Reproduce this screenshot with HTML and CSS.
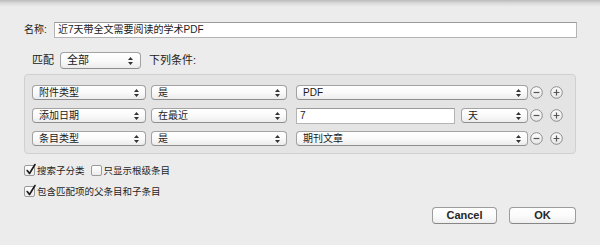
FILE: index.html
```html
<!DOCTYPE html>
<html lang="zh">
<head>
<meta charset="utf-8">
<link rel="stylesheet" href="styles.css">
</head>
<body>
<div class="window">
  <div class="topshadow"></div>
  <div class="name-row">
    <span class="label">名称:</span>
    <div class="textfield name-field">近7天带全文需要阅读的学术PDF</div>
  </div>
  <div class="match-row">
    <span class="big-label">匹配</span>
    <div class="popup popup-big"><span>全部</span><svg class="arrows" width="5" height="8" viewBox="0 0 5 8"><path d="M2.5 0 L5 3 L0 3 Z M2.5 8 L5 5 L0 5 Z" fill="#333"/></svg></div>
    <span class="big-label">下列条件:</span>
  </div>
  <div class="group">
    <div class="cond-row">
      <div class="popup w-field"><span>附件类型</span><svg class="arrows" width="5" height="8" viewBox="0 0 5 8"><path d="M2.5 0 L5 3 L0 3 Z M2.5 8 L5 5 L0 5 Z" fill="#333"/></svg></div>
      <div class="popup w-op"><span>是</span><svg class="arrows" width="5" height="8" viewBox="0 0 5 8"><path d="M2.5 0 L5 3 L0 3 Z M2.5 8 L5 5 L0 5 Z" fill="#333"/></svg></div>
      <div class="popup w-value"><span>PDF</span><svg class="arrows" width="5" height="8" viewBox="0 0 5 8"><path d="M2.5 0 L5 3 L0 3 Z M2.5 8 L5 5 L0 5 Z" fill="#333"/></svg></div>
      <div class="circ-btns">
        <svg width="13" height="13" viewBox="0 0 13 13"><defs><linearGradient id="g1" x1="0" y1="0" x2="0" y2="1"><stop offset="0" stop-color="#fdfdfd"/><stop offset="1" stop-color="#e6e6e6"/></linearGradient></defs><circle cx="6.5" cy="6.5" r="5.8" fill="url(#g1)" stroke="#8c8c8c"/><path d="M3.6 6.5 H9.4" stroke="#555" stroke-width="1.2"/></svg>
        <svg width="13" height="13" viewBox="0 0 13 13"><circle cx="6.5" cy="6.5" r="5.8" fill="url(#g1)" stroke="#8c8c8c"/><path d="M3.6 6.5 H9.4 M6.5 3.6 V9.4" stroke="#555" stroke-width="1.2"/></svg>
      </div>
    </div>
    <div class="cond-row">
      <div class="popup w-field"><span>添加日期</span><svg class="arrows" width="5" height="8" viewBox="0 0 5 8"><path d="M2.5 0 L5 3 L0 3 Z M2.5 8 L5 5 L0 5 Z" fill="#333"/></svg></div>
      <div class="popup w-op"><span>在最近</span><svg class="arrows" width="5" height="8" viewBox="0 0 5 8"><path d="M2.5 0 L5 3 L0 3 Z M2.5 8 L5 5 L0 5 Z" fill="#333"/></svg></div>
      <div class="value-split">
        <div class="textfield days-field">7</div>
        <div class="popup w-unit"><span>天</span><svg class="arrows" width="5" height="8" viewBox="0 0 5 8"><path d="M2.5 0 L5 3 L0 3 Z M2.5 8 L5 5 L0 5 Z" fill="#333"/></svg></div>
      </div>
      <div class="circ-btns">
        <svg width="13" height="13" viewBox="0 0 13 13"><circle cx="6.5" cy="6.5" r="5.8" fill="url(#g1)" stroke="#8c8c8c"/><path d="M3.6 6.5 H9.4" stroke="#555" stroke-width="1.2"/></svg>
        <svg width="13" height="13" viewBox="0 0 13 13"><circle cx="6.5" cy="6.5" r="5.8" fill="url(#g1)" stroke="#8c8c8c"/><path d="M3.6 6.5 H9.4 M6.5 3.6 V9.4" stroke="#555" stroke-width="1.2"/></svg>
      </div>
    </div>
    <div class="cond-row">
      <div class="popup w-field"><span>条目类型</span><svg class="arrows" width="5" height="8" viewBox="0 0 5 8"><path d="M2.5 0 L5 3 L0 3 Z M2.5 8 L5 5 L0 5 Z" fill="#333"/></svg></div>
      <div class="popup w-op"><span>是</span><svg class="arrows" width="5" height="8" viewBox="0 0 5 8"><path d="M2.5 0 L5 3 L0 3 Z M2.5 8 L5 5 L0 5 Z" fill="#333"/></svg></div>
      <div class="popup w-value"><span>期刊文章</span><svg class="arrows" width="5" height="8" viewBox="0 0 5 8"><path d="M2.5 0 L5 3 L0 3 Z M2.5 8 L5 5 L0 5 Z" fill="#333"/></svg></div>
      <div class="circ-btns">
        <svg width="13" height="13" viewBox="0 0 13 13"><circle cx="6.5" cy="6.5" r="5.8" fill="url(#g1)" stroke="#8c8c8c"/><path d="M3.6 6.5 H9.4" stroke="#555" stroke-width="1.2"/></svg>
        <svg width="13" height="13" viewBox="0 0 13 13"><circle cx="6.5" cy="6.5" r="5.8" fill="url(#g1)" stroke="#8c8c8c"/><path d="M3.6 6.5 H9.4 M6.5 3.6 V9.4" stroke="#555" stroke-width="1.2"/></svg>
      </div>
    </div>
  </div>
  <div class="checks">
    <div class="check-row">
      <label class="check"><span class="box"><svg class="tick" width="12" height="13" viewBox="0 0 12 13"><path d="M2.2 7.5 L4.5 10.5 L10 1.5" fill="none" stroke="#1a1a1a" stroke-width="1.6" stroke-linecap="round" stroke-linejoin="round"/></svg></span>搜索子分类</label>
      <label class="check"><span class="box"></span>只显示根级条目</label>
    </div>
    <div class="check-row">
      <label class="check"><span class="box"><svg class="tick" width="12" height="13" viewBox="0 0 12 13"><path d="M2.2 7.5 L4.5 10.5 L10 1.5" fill="none" stroke="#1a1a1a" stroke-width="1.6" stroke-linecap="round" stroke-linejoin="round"/></svg></span>包含匹配项的父条目和子条目</label>
    </div>
  </div>
  <div class="buttons">
    <div class="btn btn-cancel">Cancel</div>
    <div class="btn btn-ok">OK</div>
  </div>
</div>
</body>
</html>
```

FILE: styles.css
```css
html, body {
  margin: 0;
  padding: 0;
}
body {
  width: 600px;
  height: 245px;
  background: #ececec;
  font-family: "Liberation Sans", "Noto Sans CJK SC", sans-serif;
  color: #1e1e1e;
  overflow: hidden;
}
.window {
  position: relative;
  height: 245px;
  display: flex;
  flex-direction: column;
}
.topshadow {
  height: 7px;
  background: linear-gradient(to bottom, #b9b9b9 0%, #d8d8d8 40%, #ececec 100%);
}
.name-row {
  display: flex;
  align-items: center;
  margin-top: 15px;
  padding-left: 24px;
  height: 16px;
}
.label {
  font-size: 10px;
  width: 30px;
  line-height: 16px;
  color: #222;
}
.textfield {
  box-sizing: border-box;
  height: 16px;
  background: #fff;
  border: 1px solid #b4b4b4;
  border-top-color: #9a9a9a;
  font-size: 10px;
  line-height: 14px;
  padding-left: 3px;
  color: #1a1a1a;
  white-space: nowrap;
}
.name-field {
  width: 523px;
}
.match-row {
  display: flex;
  align-items: center;
  margin-top: 14px;
  padding-left: 32px;
  height: 17px;
}
.big-label {
  font-size: 11px;
  color: #222;
  line-height: 17px;
}
.popup {
  box-sizing: border-box;
  height: 15px;
  display: flex;
  align-items: center;
  justify-content: space-between;
  border: 1px solid #a2a2a2;
  border-bottom-color: #8e8e8e;
  border-radius: 4px;
  background: linear-gradient(to bottom, #ffffff 0%, #fafafa 50%, #ececec 100%);
  padding: 0 6px 0 6px;
  font-size: 10px;
  color: #1a1a1a;
  white-space: nowrap;
}
.popup span {
  line-height: 13px;
}
.arrows {
  display: block;
  flex: none;
}
.popup-big {
  width: 81px;
  height: 17px;
  margin: 0 8px 0 6px;
  font-size: 11px;
  padding-right: 7px;
}
.group {
  box-sizing: border-box;
  margin-top: 5px;
  margin-left: 24px;
  width: 552px;
  height: 80px;
  border: 1px solid #d0d0d0;
  border-radius: 4px;
  background: #e4e4e4;
  padding: 10px 0 0 7px;
  display: flex;
  flex-direction: column;
  gap: 8px;
}
.cond-row {
  display: flex;
  align-items: center;
  height: 15px;
}
.w-field {
  width: 114px;
  margin-right: 5px;
}
.w-op {
  width: 136px;
  margin-right: 9px;
}
.w-value {
  width: 232px;
}
.value-split {
  width: 232px;
  display: flex;
  align-items: center;
  justify-content: space-between;
}
.days-field {
  width: 159px;
  height: 16px;
}
.w-unit {
  width: 67px;
}
.circ-btns {
  display: flex;
  align-items: center;
  gap: 7px;
  margin-left: 2px;
}
.circ-btns svg {
  display: block;
}
.checks {
  margin-top: 10px;
  padding-left: 24px;
  display: flex;
  flex-direction: column;
  gap: 8px;
}
.check-row {
  display: flex;
  align-items: center;
  height: 13px;
  gap: 6px;
}
.check {
  display: flex;
  align-items: center;
  font-size: 9.5px;
  color: #1e1e1e;
  line-height: 13px;
}
.box {
  position: relative;
  box-sizing: border-box;
  width: 11px;
  height: 11px;
  border: 1px solid #9a9a9a;
  border-radius: 2px;
  background: linear-gradient(to bottom, #ffffff, #ececec);
  margin-right: 2px;
  flex: none;
}
.tick {
  position: absolute;
  left: 0;
  top: -3px;
}
.buttons {
  display: flex;
  justify-content: flex-end;
  gap: 12px;
  margin-top: 9px;
  padding-right: 24px;
}
.btn {
  box-sizing: border-box;
  height: 17px;
  border: 1px solid #9c9c9c;
  border-bottom-color: #868686;
  border-radius: 4px;
  background: linear-gradient(to bottom, #ffffff 0%, #fbfbfb 50%, #efefef 100%);
  font-size: 11px;
  font-weight: bold;
  color: #262626;
  display: flex;
  align-items: center;
  justify-content: center;
  line-height: 15px;
}
.btn-cancel {
  width: 65px;
}
.btn-ok {
  width: 67px;
}
```
